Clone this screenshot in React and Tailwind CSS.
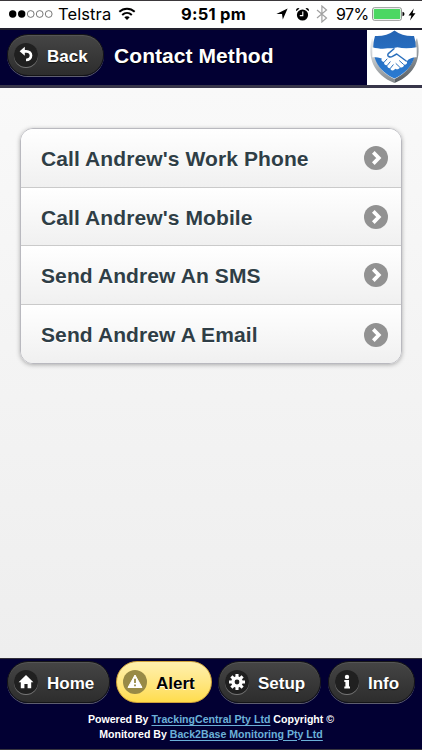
import React from 'react';

const contacts = [
  "Call Andrew's Work Phone",
  "Call Andrew's Mobile",
  'Send Andrew An SMS',
  'Send Andrew A Email',
];

const BackIcon = () => (
  <svg width="24" height="24" viewBox="0 0 24 24" fill="none">
    <path d="M9.5 8.3H12.3C15.2 8.3 17 10.2 17 12.6C17 15.2 15 17 12 17" stroke="#fff" strokeWidth="2.7" />
    <path d="M5.6 8.3L10.8 3.8V12.8Z" fill="#fff" />
  </svg>
);

const HomeIcon = () => (
  <svg width="24" height="24" viewBox="0 0 24 24">
    <path d="M12 5L19.4 12.2H17.2V18.2H13.6V14H10.4V18.2H6.8V12.2H4.6Z" fill="#fff" />
  </svg>
);

const AlertIcon = () => (
  <svg width="24" height="24" viewBox="0 0 24 24">
    <path d="M12 5L19 17.5H5Z" fill="#fff" stroke="#fff" strokeWidth="1" strokeLinejoin="round" />
    <path d="M12 8.8V13M12 14.4V16.2" stroke="#988a46" strokeWidth="1.8" />
  </svg>
);

const GearIcon = () => (
  <svg width="24" height="24" viewBox="0 0 24 24">
    <path
      d="M12 4V20M4 12H20M6.4 6.4L17.6 17.6M17.6 6.4L6.4 17.6"
      stroke="#fff"
      strokeWidth="3.1"
    />
    <circle cx="12" cy="12" r="5.7" fill="#fff" />
    <circle cx="12" cy="12" r="2.4" fill="#202020" />
  </svg>
);

const InfoIcon = () => (
  <svg width="24" height="24" viewBox="0 0 24 24">
    <circle cx="12" cy="6.9" r="2.2" fill="#fff" />
    <path d="M9.3 10H14V16.4H15V18.4H9.3V16.4H10.4V12H9.3Z" fill="#fff" />
  </svg>
);

const ArrowIcon = () => (
  <svg width="24" height="24" viewBox="0 0 24 24">
    <circle cx="12" cy="12" r="12" fill="#929292" />
    <path d="M9.3 6.4L14.8 12L9.3 17.6" fill="none" stroke="#fff" strokeWidth="3.7" />
  </svg>
);

const ShieldLogo = () => (
  <svg width="55" height="54" viewBox="0 0 55 54">
    <defs>
      <linearGradient id="rimLeft" x1="0" y1="0" x2="0" y2="1">
        <stop offset="0" stopColor="#f0f1f2" />
        <stop offset="0.5" stopColor="#c0c4c7" />
        <stop offset="1" stopColor="#83888c" />
      </linearGradient>
      <linearGradient id="rimRight" x1="0" y1="0" x2="0" y2="1">
        <stop offset="0" stopColor="#b3b8bc" />
        <stop offset="0.6" stopColor="#7a8085" />
        <stop offset="1" stopColor="#565c61" />
      </linearGradient>
      <linearGradient id="face" x1="0" y1="0" x2="0" y2="1">
        <stop offset="0" stopColor="#2464b3" />
        <stop offset="1" stopColor="#2a7bd2" />
      </linearGradient>
    </defs>
    <path d="M5 8C0 27 6 44.5 27.5 53V49C11 41 5 27 7 12Z" fill="url(#rimLeft)" />
    <path d="M50 8C55 27 49 44.5 27.5 53V49C44 41 50 27 48 12Z" fill="url(#rimRight)" />
    <path d="M27.5 0.5C33 4.5 40 6.5 47 6L48 10C51 26 45 40.5 27.5 48.5C10 40.5 4 26 7 10L8 6C15 6.5 22 4.5 27.5 0.5Z" fill="url(#face)" />
    <path
      d="M5.3 17.2C11 18.6 16 19.2 20.5 18.3L25.5 18.2L30.5 17.3C36 18.6 43 18.5 49.7 17.2V27.2C46 27 43.5 28 41.5 29.6L39.8 31.2C40.8 33.6 39 35 37 34.6C37 37 35 38 33 37.2C32 39.4 30 39.7 28.5 38.7L26.5 40.3C24.5 41 23 39.6 23.6 38C21.5 38.6 19.8 37 20.4 35.2C18 35.7 16.5 33.8 17.3 32C15 32.2 13.7 30.4 14.8 28.6C12 27.5 8.5 27 5.3 27.2Z"
      fill="#fff"
    />
    <path
      d="M27 18.8L21.3 23.6C19.6 26 22.7 28 25.5 26.4L29.7 24L39.2 31"
      fill="none"
      stroke="#2b70bd"
      strokeWidth="1.5"
      strokeLinecap="round"
      strokeLinejoin="round"
    />
    <path
      d="M17.3 32L20 29M20.4 35.2L23.2 31.8M23.6 38L26.2 34.8M32.5 30.8L36.5 34.4M29 33.6L32.6 37"
      fill="none"
      stroke="#2b70bd"
      strokeWidth="1"
      strokeLinecap="round"
    />
  </svg>
);

const StatusBar = () => (
  <div className="h-7 shrink-0 flex items-center border-t border-[#3b383b] bg-white pl-[9px] pr-[6px] pb-px font-['Inter',sans-serif] text-[16px] text-black">
    <svg width="46" height="10" viewBox="0 0 46 10" className="shrink-0">
      <circle cx="3.7" cy="5" r="3.7" />
      <circle cx="12.7" cy="5" r="3.7" />
      <g fill="none" stroke="#555" strokeWidth="0.8">
        <circle cx="21.7" cy="5" r="3.4" />
        <circle cx="30.7" cy="5" r="3.4" />
        <circle cx="39.7" cy="5" r="3.4" />
      </g>
    </svg>
    <span className="ml-[3px] w-[54px] whitespace-nowrap text-[16.5px] tracking-[0.1px]">Telstra</span>
    <svg width="18" height="14" viewBox="0 0 18 14" className="ml-[6px] shrink-0">
      <g fill="none" stroke="#000" strokeWidth="2">
        <path d="M1.3 4.8C5.7 0.7 12.3 0.7 16.7 4.8" />
        <path d="M4.2 7.9C7 5.3 11 5.3 13.8 7.9" />
      </g>
      <path d="M9 13L6.3 10.3C7.8 8.9 10.2 8.9 11.7 10.3Z" />
    </svg>
    <span className="ml-[45px] w-[68px] whitespace-nowrap text-[16.5px] font-bold tracking-[0.25px]">9:51 pm</span>
    <div className="ml-auto flex items-center">
      <svg width="12" height="12" viewBox="0 0 12 12">
        <path d="M11.6 0.4L6.8 11.6L6 6H0.4Z" />
      </svg>
      <svg width="15" height="15" viewBox="0 0 15 15" className="ml-[7px]">
        <circle cx="7.5" cy="8" r="5.6" />
        <path d="M1.3 4.2A2.2 2.2 0 0 1 4.5 1.4ZM13.7 4.2A2.2 2.2 0 0 0 10.5 1.4Z" />
        <path d="M7.8 4.5V8.6H4.8" fill="none" stroke="#fff" strokeWidth="1.1" />
      </svg>
      <svg width="12" height="18" viewBox="0 0 12 18" className="ml-[6px]">
        <path d="M1 5L10.5 13L5.9 17V1L10.5 5L1 13" fill="none" stroke="#a1a1a1" strokeWidth="1.2" />
      </svg>
      <span className="ml-[8px] w-[32px] whitespace-nowrap tracking-[-0.6px]">97%</span>
      <svg width="33" height="14" viewBox="0 0 33 14" className="ml-[4px]">
        <rect x="0.5" y="0.7" width="29" height="12.6" rx="2" fill="#fff" stroke="#777" strokeWidth="0.8" />
        <rect x="1.7" y="1.9" width="26.6" height="10.2" rx="0.8" fill="#4cd763" />
        <path d="M30.5 4.8Q32.5 5 32.5 7T30.5 9.2Z" />
      </svg>
      <svg width="8" height="13" viewBox="0 0 8 13" className="ml-[3px]">
        <path d="M5.8 0.5L0.5 7.4H3.4L2 12.5L7.5 5.2H4.6Z" />
      </svg>
    </div>
  </div>
);

const Button = ({ icon, label, className, active }) => (
  <button
    className={`flex h-[42px] shrink-0 items-center rounded-full border pl-[6px] text-[17px] font-bold ${
      active
        ? 'border-[#cfa23a] bg-linear-to-b from-[#fff0ad] to-[#ffdd4b] text-black [text-shadow:0_1px_0_#fff]'
        : 'border-[#141417] bg-linear-to-b from-[#454545] to-[#2d2d2d] text-white shadow-[0_1px_0_#5e5e70,inset_0_1px_0_#555] [text-shadow:0_1px_1px_#111]'
    } ${className}`}
  >
    <span
      className={`flex size-6 shrink-0 items-center justify-center rounded-full ${
        active ? 'bg-[#988a46]' : 'bg-[#202020] shadow-[0_1px_0_#777]'
      }`}
    >
      {icon}
    </span>
    <span className="ml-[9px] pt-[3px]">{label}</span>
  </button>
);

const App = () => {
  return (
    <div className="flex h-[750px] w-[422px] flex-col overflow-hidden bg-[#f1f1f1] font-['Liberation_Sans',Arial,sans-serif]">
      <StatusBar />

      <header className="flex h-[60px] shrink-0 items-start justify-between border-t-2 border-b-[3px] border-t-[#22212e] border-b-[#38364a] bg-[#020033] pl-[7px]">
        <div className="flex items-center pt-1">
          <Button icon={<BackIcon />} label="Back" className="w-[97px]" />
          <h1 className="ml-[10px] whitespace-nowrap pt-[2px] text-[21px] font-bold tracking-[0.07px] text-white [text-shadow:0_1px_1px_#000]">Contact Method</h1>
        </div>
        <div className="h-[55px] w-[55px] overflow-hidden bg-white">
          <ShieldLogo />
        </div>
      </header>

      <main className="flex-1 bg-linear-to-b from-[#f9f9f9] to-[#eeeeee] px-5 pt-10">
        <ul className="overflow-hidden rounded-[13px] border border-[#b9b9bf] shadow-[0_1px_4px_#aaa]">
          {contacts.map((contact) => (
            <li
              key={contact}
              className="flex h-[58.6px] items-center justify-between border-b border-[#cacaca] bg-linear-to-b from-white to-[#f0f0f0] pr-[13px] pl-5 pt-px last:border-b-0"
            >
              <span className="whitespace-nowrap pt-px text-[21px] font-bold tracking-[0.1px] text-[#2f3e46] [text-shadow:0_1px_0_#fff]">{contact}</span>
              <ArrowIcon />
            </li>
          ))}
        </ul>
      </main>

      <footer className="h-[92px] shrink-0 border-t border-b border-t-[#302e38] border-b-[#38363f] bg-[#020033] pt-[2px]">
        <nav className="flex pl-[7px]">
          <Button icon={<HomeIcon />} label="Home" className="w-[103px]" />
          <Button icon={<AlertIcon />} label="Alert" className="ml-[6px] w-[96px]" active />
          <Button icon={<GearIcon />} label="Setup" className="ml-[6px] w-[103px]" />
          <Button icon={<InfoIcon />} label="Info" className="ml-[7px] w-[87px]" />
        </nav>
        <div className="mt-[9px] text-center text-[10.6px] leading-[14.5px] font-bold text-white">
          <p>
            Powered By <a className="text-[#6bb0d8] underline underline-offset-2">TrackingCentral Pty Ltd</a> Copyright ©
          </p>
          <p>
            Monitored By <a className="text-[#6bb0d8] underline underline-offset-2">Back2Base Monitoring Pty Ltd</a>
          </p>
        </div>
      </footer>
    </div>
  );
};

export default App;
